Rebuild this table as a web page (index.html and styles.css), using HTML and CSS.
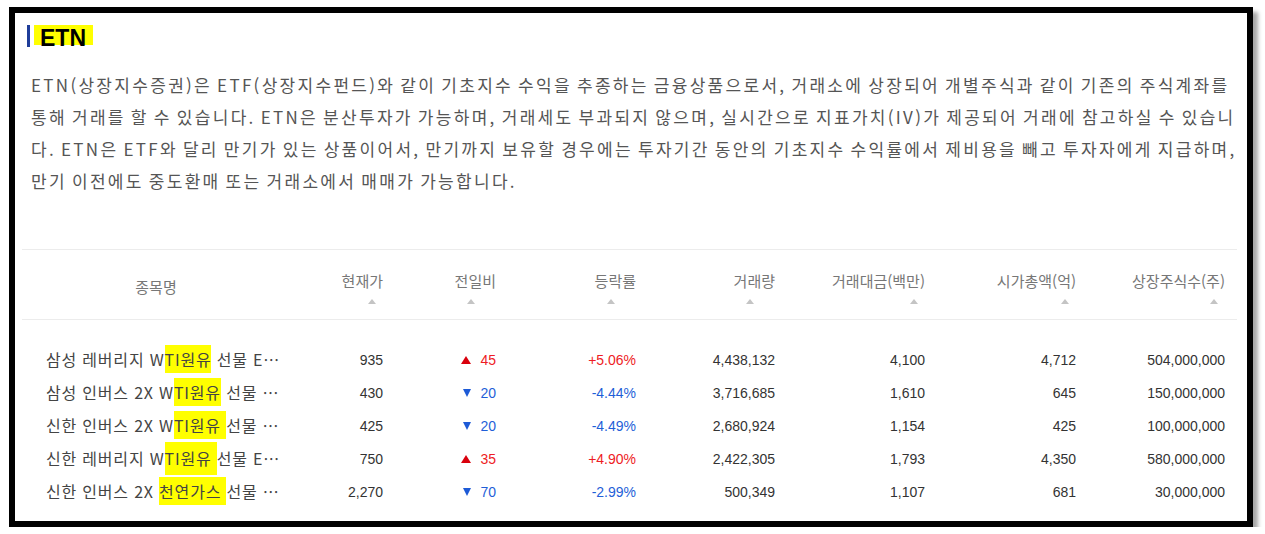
FILE: index.html
```html
<!DOCTYPE html>
<html lang="ko">
<head>
<meta charset="utf-8">
<title>ETN</title>
<link rel="stylesheet" href="styles.css">
</head>
<body>
<div class="frame">
  <h1 class="title"><span class="title-mark">ETN</span></h1>
  <p class="desc">ETN(상장지수증권)은 ETF(상장지수펀드)와 같이 기초지수 수익을 추종하는 금융상품으로서, 거래소에 상장되어 개별주식과 같이 기존의 주식계좌를<br>통해 거래를 할 수 있습니다. ETN은 분산투자가 가능하며, 거래세도 부과되지 않으며, 실시간으로 지표가치(IV)가 제공되어 거래에 참고하실 수 있습니<br>다. ETN은 ETF와 달리 만기가 있는 상품이어서, 만기까지 보유할 경우에는 투자기간 동안의 기초지수 수익률에서 제비용을 빼고 투자자에게 지급하며,<br>만기 이전에도 중도환매 또는 거래소에서 매매가 가능합니다.</p>

  <div class="grid-table">
    <div class="thead">
      <div class="th th-name">종목명</div>
      <div class="th"><span>현재가</span><i class="sort"></i></div>
      <div class="th"><span>전일비</span><i class="sort sort-mid"></i></div>
      <div class="th"><span>등락률</span><i class="sort sort-mid"></i></div>
      <div class="th"><span>거래량</span><i class="sort sort-mid"></i></div>
      <div class="th"><span>거래대금(백만)</span><i class="sort"></i></div>
      <div class="th"><span>시가총액(억)</span><i class="sort"></i></div>
      <div class="th"><span>상장주식수(주)</span><i class="sort"></i></div>
    </div>
    <div class="tbody">
      <div class="tr">
        <div class="td name">삼성 레버리지 W<mark>TI원유</mark> 선물 ETN</div>
        <div class="td">935</div>
        <div class="td up"><i class="tri-up"></i>45</div>
        <div class="td up">+5.06%</div>
        <div class="td">4,438,132</div>
        <div class="td">4,100</div>
        <div class="td">4,712</div>
        <div class="td">504,000,000</div>
      </div>
      <div class="tr">
        <div class="td name">삼성 인버스 2X W<mark>TI원유</mark> 선물 ETN</div>
        <div class="td">430</div>
        <div class="td down"><i class="tri-down"></i>20</div>
        <div class="td down">-4.44%</div>
        <div class="td">3,716,685</div>
        <div class="td">1,610</div>
        <div class="td">645</div>
        <div class="td">150,000,000</div>
      </div>
      <div class="tr">
        <div class="td name">신한 인버스 2X W<mark>TI원유 </mark>선물 ETN</div>
        <div class="td">425</div>
        <div class="td down"><i class="tri-down"></i>20</div>
        <div class="td down">-4.49%</div>
        <div class="td">2,680,924</div>
        <div class="td">1,154</div>
        <div class="td">425</div>
        <div class="td">100,000,000</div>
      </div>
      <div class="tr">
        <div class="td name">신한 레버리지 W<mark class="tall">TI원유 </mark>선물 ETN</div>
        <div class="td">750</div>
        <div class="td up"><i class="tri-up"></i>35</div>
        <div class="td up">+4.90%</div>
        <div class="td">2,422,305</div>
        <div class="td">1,793</div>
        <div class="td">4,350</div>
        <div class="td">580,000,000</div>
      </div>
      <div class="tr">
        <div class="td name">신한 인버스 2X <mark>천연가스 </mark>선물 ETN</div>
        <div class="td">2,270</div>
        <div class="td down"><i class="tri-down"></i>70</div>
        <div class="td down">-2.99%</div>
        <div class="td">500,349</div>
        <div class="td">1,107</div>
        <div class="td">681</div>
        <div class="td">30,000,000</div>
      </div>
    </div>
  </div>
</div>
</body>
</html>
```
FILE: styles.css
```css
html, body {
  margin: 0;
  padding: 0;
  background: #fff;
}

.frame {
  margin: 7px 0 0 9px;
  width: 1244px;
  height: 520px;
  box-sizing: border-box;
  border: 6px solid #000;
  box-shadow: 5px 5px 4px rgba(0, 0, 0, 0.35);
  padding: 12px 10px 0 7px;
  overflow: hidden;
  background: #fff;
}

.title {
  margin: 0 0 0 5px;
  height: 22px;
  display: flex;
  align-items: flex-start;
  border-left: 3px solid #1f3d99;
  padding-left: 4px;
}

.title-mark {
  display: block;
  height: 20px;
  line-height: 24px;
  background: #ffff00;
  padding: 0 7px 0 6px;
  font: bold 23px "Liberation Sans", Arial, sans-serif;
  color: #000;
}

.desc {
  margin: 22px 0 0 9px;
  font-family: "Noto Sans CJK KR", sans-serif;
  font-size: 17px;
  line-height: 32px;
  letter-spacing: 2.3px;
  word-spacing: -2px;
  color: #555;
  white-space: nowrap;
}

.grid-table {
  margin-top: 52px;
}

.thead,
.tr {
  display: grid;
  grid-template-columns: 268px 103px 113px 140px 139px 150px 151px 151px;
}

.thead {
  box-sizing: border-box;
  height: 71px;
  border-top: 1px solid #ececec;
  border-bottom: 1px solid #ececec;
}

.th {
  display: flex;
  flex-direction: column;
  align-items: flex-end;
  padding: 21px 10px 0 0;
  font-family: "Noto Sans CJK KR", sans-serif;
  font-size: 15px;
  line-height: 20px;
  color: #777;
}

.th:last-child {
  padding-right: 12px;
}

.th-name {
  align-items: center;
  padding: 27px 0 0 0;
}

.sort {
  display: block;
  width: 0;
  height: 0;
  margin: 8px 7px 0 0;
  border-left: 4px solid transparent;
  border-right: 4px solid transparent;
  border-bottom: 5px solid #c4c4c4;
}

.sort-mid {
  margin-right: 21px;
}

.tbody {
  padding-top: 23px;
}

.tr {
  height: 33px;
}

.td {
  display: flex;
  justify-content: flex-end;
  align-items: center;
  padding-right: 10px;
  font-family: "Liberation Sans", Arial, sans-serif;
  font-size: 14px;
  color: #333;
  white-space: nowrap;
}

.td:last-child {
  padding-right: 12px;
}

.td.name {
  display: block;
  padding: 0 10px 0 24px;
  line-height: 33px;
  font-family: "Noto Sans CJK KR", sans-serif;
  font-size: 16px;
  letter-spacing: 0.8px;
  color: #444;
  overflow: hidden;
  text-overflow: ellipsis;
}

mark {
  background: #ffff00;
  color: inherit;
  padding: 2px 0;
}

mark.tall {
  padding: 4px 0 5px;
}

.up {
  color: #ee1c25;
}

.down {
  color: #1f5fd8;
}

.tri-up,
.tri-down {
  display: block;
  width: 0;
  height: 0;
  margin-right: 9px;
  border-left: 5px solid transparent;
  border-right: 5px solid transparent;
}

.tri-up {
  border-bottom: 8px solid #d9000d;
}

.tri-down {
  border-left-width: 4.5px;
  border-right-width: 4.5px;
  border-top: 8px solid #1d5ad6;
}
```
